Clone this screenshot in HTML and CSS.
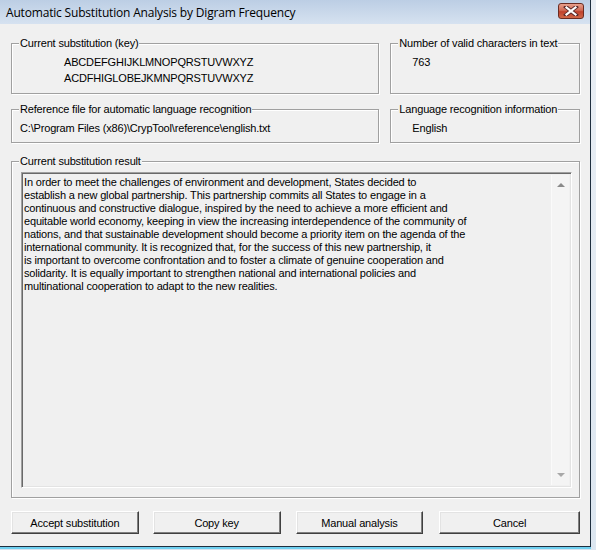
FILE: index.html
```html
<!DOCTYPE html>
<html>
<head>
<meta charset="utf-8">
<link rel="stylesheet" href="styles.css">
</head>
<body>
<div class="screen">
  <div class="window">
    <div class="titlebar">
      <span class="title">Automatic Substitution Analysis by Digram Frequency</span>
      <div class="close">
        <svg width="16" height="10" viewBox="0 0 16 10">
          <path d="M3 1 L13 9 M13 1 L3 9" stroke="#5a2a2a" stroke-width="4" stroke-linecap="square"/>
          <path d="M3.5 1.5 L12.5 8.5 M12.5 1.5 L3.5 8.5" stroke="#ffffff" stroke-width="2.2" stroke-linecap="square"/>
        </svg>
      </div>
    </div>
    <div class="client">
      <div class="row">
        <fieldset class="group wide">
          <legend>Current substitution (key)</legend>
          <div class="keylines">
            <div>ABCDEFGHIJKLMNOPQRSTUVWXYZ</div>
            <div>ACDFHIGLOBEJKMNPQRSTUVWXYZ</div>
          </div>
        </fieldset>
        <fieldset class="group narrow">
          <legend>Number of valid characters in text</legend>
          <div class="value count">763</div>
        </fieldset>
      </div>
      <div class="row row2">
        <fieldset class="group wide small">
          <legend>Reference file for automatic language recognition</legend>
          <div class="path">C:\Program Files (x86)\CrypTool\reference\english.txt</div>
        </fieldset>
        <fieldset class="group narrow small">
          <legend>Language recognition information</legend>
          <div class="value lang">English</div>
        </fieldset>
      </div>
      <fieldset class="group result">
        <legend>Current substitution result</legend>
        <div class="textarea">
          <div class="text">In order to meet the challenges of environment and development, States decided to
establish a new global partnership. This partnership commits all States to engage in a
continuous and constructive dialogue, inspired by the need to achieve a more efficient and
equitable world economy, keeping in view the increasing interdependence of the community of
nations, and that sustainable development should become a priority item on the agenda of the
international community. It is recognized that, for the success of this new partnership, it
is important to overcome confrontation and to foster a climate of genuine cooperation and
solidarity. It is equally important to strengthen national and international policies and
multinational cooperation to adapt to the new realities.</div>
          <div class="scrollbar">
            <span class="arrow up"></span>
            <span class="arrow down"></span>
          </div>
        </div>
      </fieldset>
      <div class="buttons">
        <button class="btn">Accept substitution</button>
        <button class="btn">Copy key</button>
        <button class="btn">Manual analysis</button>
        <button class="btn cancel">Cancel</button>
      </div>
    </div>
  </div>
  <div class="outside"></div>
</div>
</body>
</html>
```
FILE: styles.css
```css
html, body {
  margin: 0;
  padding: 0;
  width: 596px;
  height: 550px;
  overflow: hidden;
  background: #d7e3ef;
}
.screen {
  display: flex;
  width: 596px;
  height: 550px;
}
.window {
  width: 590px;
  height: 546px;
  background: #f0f0f0;
  border-right: 1px solid #1f2f3f;
  border-bottom: 1px solid #1f2f3f;
  box-shadow: 0 2px 0 #6fd0f0;
  display: flex;
  flex-direction: column;
  font-family: "Liberation Sans", Arial, sans-serif;
  font-size: 11px;
  letter-spacing: -0.17px;
  color: #000;
}
.outside {
  flex: 1;
  background: linear-gradient(#e9eef4, #dce6f0);
}
.titlebar {
  height: 24px;
  flex: none;
  background: linear-gradient(#bccee4, #d6e2f0);
  display: flex;
  align-items: center;
  justify-content: space-between;
  padding: 0 6px 0 6px;
}
.title {
  font-family: "Open Sans", "Noto Sans", sans-serif;
  font-size: 12px;
  color: #000;
  letter-spacing: -0.18px;
}
.close {
  width: 26px;
  height: 16px;
  margin-top: -2px;
  border: 1px solid #6b2c22;
  border-radius: 3px;
  background: linear-gradient(#e8a08c, #d06a55 45%, #c0412c 55%, #d06848);
  display: flex;
  align-items: center;
  justify-content: center;
  box-sizing: border-box;
}
.client {
  flex: 1;
  padding: 0 10px 0 11px;
  display: flex;
  flex-direction: column;
}
.row {
  display: flex;
  gap: 11px;
  margin-top: 13px;
}
.row2 {
  margin-top: 9px;
}
.group {
  margin: 0;
  padding: 0;
  border: 1px solid #a0a0a0;
  box-shadow: 1px 1px 0 #fff, inset 1px 1px 0 #fff;
  min-width: 0;
}
.group legend {
  margin-left: 7px;
  padding: 0 1px;
  line-height: 13px;
  background: #f0f0f0;
}
.wide {
  width: 369px;
  box-sizing: border-box;
}
.narrow {
  width: 190px;
  box-sizing: border-box;
}
.keylines {
  padding: 6px 0 0 52px;
  height: 43px;
  box-sizing: border-box;
  line-height: 13px;
  display: flex;
  flex-direction: column;
  gap: 3px;
}
.value {
  padding-left: 21px;
  line-height: 13px;
}
.count {
  padding-top: 6px;
}
.small .path,
.small .value {
  line-height: 13px;
  padding-top: 6px;
  height: 26px;
  box-sizing: border-box;
}
.path {
  padding-left: 8px;
}
.result {
  margin-top: 12px;
  height: 343px;
  box-sizing: border-box;
  padding: 4px 7px 8px 0;
}
.textarea {
  margin-left: 9px;
  height: 316px;
  box-sizing: border-box;
  border: 1px solid;
  border-color: #a0a0a0 #fff #fff #a0a0a0;
  box-shadow: inset 1px 1px 0 #696969, inset -1px -1px 0 #e3e3e3;
  display: flex;
  padding: 2px 2px 2px 2px;
}
.text {
  flex: 1;
  white-space: pre;
  line-height: 13px;
  padding: 1px 0 0 0;
  overflow: hidden;
}
.scrollbar {
  width: 17px;
  background: #f4f4f4;
  border-left: 1px solid #fafafa;
  display: flex;
  flex-direction: column;
  justify-content: space-between;
  align-items: center;
  padding: 8px 0 8px 0;
}
.arrow {
  width: 0;
  height: 0;
  border-left: 4px solid transparent;
  border-right: 4px solid transparent;
}
.arrow.up {
  border-bottom: 4px solid #8a8a8a;
}
.arrow.down {
  border-top: 4px solid #a8a8a8;
}
.buttons {
  display: flex;
  margin-top: 13px;
}
.btn {
  width: 128px;
  height: 23px;
  margin: 0 14px 0 0;
  padding: 0;
  font-family: "Liberation Sans", Arial, sans-serif;
  font-size: 11px;
  letter-spacing: -0.17px;
  color: #000;
  background: #f0f0f0;
  border: 1px solid;
  border-color: #fff #404040 #404040 #fff;
  box-shadow: inset -1px -1px 0 #808080, inset 1px 1px 0 #e3e3e3;
  box-sizing: border-box;
}
.btn:nth-child(2) { margin-right: 15px; }
.btn:nth-child(3) { margin-right: 16px; }
.cancel {
  width: 141px;
  margin: 0;
}
```
